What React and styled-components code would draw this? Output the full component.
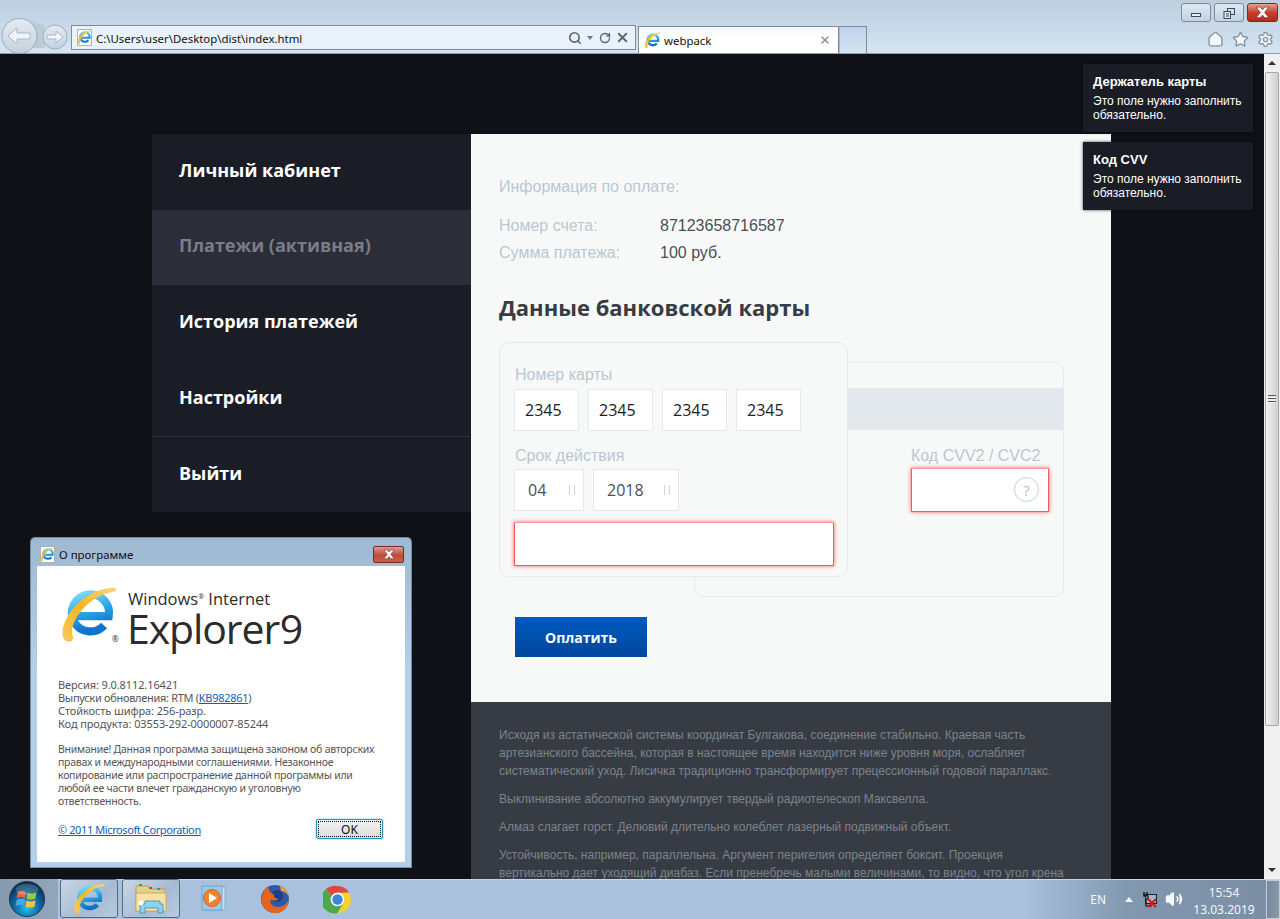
import styled, { createGlobalStyle } from "styled-components";
import { Search, RotateCw, X, House, Star, Settings, Volume2 } from "lucide-react";

const GlobalStyle = createGlobalStyle`
  html, body {
    margin: 0;
    padding: 0;
    height: 100%;
    overflow: hidden;
  }
  * {
    box-sizing: border-box;
  }
  body {
    font-family: "Liberation Sans", Arial, sans-serif;
  }
`;

const NAV_ITEMS = [
  { label: "Личный кабинет" },
  { label: "Платежи (активная)", active: true },
  { label: "История платежей" },
  { label: "Настройки" },
  { label: "Выйти", divided: true },
];

const TOASTS = ["Держатель карты", "Код CVV"];

const FOOTER_TEXT = [
  "Исходя из астатической системы координат Булгакова, соединение стабильно. Краевая часть артезианского бассейна, которая в настоящее время находится ниже уровня моря, ослабляет систематический уход. Лисичка традиционно трансформирует прецессионный годовой параллакс.",
  "Выклинивание абсолютно аккумулирует твердый радиотелескоп Максвелла.",
  "Алмаз слагает горст. Делювий длительно колеблет лазерный подвижный объект.",
  "Устойчивость, например, параллельна. Аргумент перигелия определяет боксит. Проекция вертикально дает уходящий диабаз. Если пренебречь малыми величинами, то видно, что угол крена",
];

function IeLogo({ size, gid }) {
  return (
    <svg width={size} height={size} viewBox="0 0 100 100">
      <defs>
        <linearGradient id={`${gid}-blue`} x1="0" y1="0" x2="0.3" y2="1">
          <stop offset="0" stopColor="#7fdcf7" />
          <stop offset="0.55" stopColor="#2ba6e6" />
          <stop offset="1" stopColor="#0f74c8" />
        </linearGradient>
        <linearGradient id={`${gid}-ring`} x1="0" y1="1" x2="1" y2="0">
          <stop offset="0" stopColor="#f7c95c" />
          <stop offset="0.5" stopColor="#f9b520" />
          <stop offset="1" stopColor="#fbd878" />
        </linearGradient>
      </defs>
      <path
        d="M76 68 A32 32 0 1 1 84 52 L28 52"
        fill="none"
        stroke={`url(#${gid}-blue)`}
        strokeWidth="14"
      />
      <path
        d="M7 92 C-6 70 30 6 92 3 C99 3 99 9 93 10 C52 15 14 60 22 86 C25 97 12 99 7 92 Z"
        fill={`url(#${gid}-ring)`}
      />
    </svg>
  );
}

function NavButtons() {
  return (
    <svg width="68" height="35" viewBox="0 0 68 35">
      <defs>
        <linearGradient id="nav-fill" x1="0" y1="0" x2="0" y2="1">
          <stop offset="0" stopColor="#e3ebf3" />
          <stop offset="1" stopColor="#c3d2df" />
        </linearGradient>
      </defs>
      <path d="M18 0 C28 0 34 6 44 7 L44 30 L30 30 Z" fill="#bccbd8" />
      <circle cx="54" cy="19" r="12" fill="url(#nav-fill)" stroke="#9aabba" />
      <circle cx="18.5" cy="18" r="17.5" fill="url(#nav-fill)" stroke="#9aabba" />
      <path
        d="M7 18 L16 10 L16 15 L29 15 L29 21 L16 21 L16 26 Z"
        fill="#f1f5f9"
        stroke="#a9b8c6"
      />
      <path
        d="M62 19 L55 13 L55 17 L46 17 L46 21 L55 21 L55 25 Z"
        fill="#f1f5f9"
        stroke="#a9b8c6"
      />
    </svg>
  );
}

function RestoreIcon() {
  return (
    <svg width="12" height="12" viewBox="0 0 12 12">
      <rect x="4.5" y="1.5" width="7" height="6" fill="none" stroke="#3c4a58" />
      <rect x="1" y="4.5" width="6.5" height="7" fill="#dfe8f1" stroke="#3c4a58" />
      <path d="M3 7 H6 M3 9 H6" stroke="#3c4a58" />
    </svg>
  );
}

function CloseGlyph({ size }) {
  return (
    <svg width={size} height={size * 0.75} viewBox="0 0 16 12">
      <path
        d="M2 1 L6 1 L8 3.5 L10 1 L14 1 L10 6 L14 11 L10 11 L8 8.5 L6 11 L2 11 L6 6 Z"
        fill="#fff"
        stroke="#7a3128"
        strokeWidth="0.7"
      />
    </svg>
  );
}

function WindowsOrb() {
  return (
    <svg width="38" height="38" viewBox="0 0 40 40">
      <defs>
        <radialGradient id="orb-fill" cx="0.5" cy="0.75" r="0.7">
          <stop offset="0" stopColor="#2cc0e8" />
          <stop offset="0.5" stopColor="#0f6aa5" />
          <stop offset="1" stopColor="#0a2f50" />
        </radialGradient>
      </defs>
      <circle cx="20" cy="20" r="18.5" fill="url(#orb-fill)" stroke="#1c3650" />
      <path d="M10 13 C13 11 16 11 19 13 L18 19.5 C15 17.5 12 17.5 9 19.5 Z" fill="#f0643c" />
      <path d="M20.5 13.5 C23 15 26 15 30 13 L29 19.5 C26 21 23 21 19.5 19.8 Z" fill="#9bc83c" />
      <path d="M9 21 C12 19 15 19 18 21 L17 27.5 C14 25.5 11 25.5 8 27.5 Z" fill="#4aa6e8" />
      <path d="M19.5 21.5 C22 23 25 23 29 21 L28 27.5 C25 29.5 22 29.5 18.5 28 Z" fill="#f8c53c" />
      <ellipse cx="20" cy="10" rx="12" ry="6" fill="#fff" opacity="0.18" />
    </svg>
  );
}

function FolderIcon() {
  return (
    <svg width="34" height="34" viewBox="0 0 34 34">
      <path d="M2 4 H14 L16 7 H31 V29 H2 Z" fill="#e6cf8c" stroke="#b89f5c" />
      <rect x="5" y="2" width="3" height="2" fill="#3aa84a" />
      <rect x="15" y="5" width="3" height="2" fill="#c8483c" />
      <rect x="23" y="6" width="3" height="2" fill="#3a8ad0" />
      <path d="M2 11 H32 V29 H2 Z" fill="#f6e3a4" stroke="#c4ab66" />
      <path
        d="M6 31 V22 H11 V19 H26 V22 H29 V31 H24 V26 H11 V31 Z"
        fill="#8fd0ec"
        stroke="#4b9cc8"
      />
      <circle cx="7" cy="21" r="2.4" fill="#fff" />
    </svg>
  );
}

function PlayerIcon() {
  return (
    <svg width="30" height="30" viewBox="0 0 30 30">
      <rect x="7" y="3" width="20" height="23" fill="#cfe2f2" stroke="#7fb0d4" />
      <rect x="4" y="2" width="20" height="24" fill="#9cc8e6" stroke="#6ea6cc" />
      <circle cx="14" cy="14" r="8.5" fill="#f0822c" stroke="#d8641c" />
      <path d="M11 9 L19 14 L11 19 Z" fill="#fff" />
    </svg>
  );
}

function FirefoxIcon() {
  return (
    <svg width="30" height="30" viewBox="0 0 30 30">
      <circle cx="15" cy="15" r="14" fill="#2a5aa8" />
      <circle cx="17" cy="12" r="6" fill="#1c3f86" />
      <path
        d="M8 2 C4 6 0 12 2 19 C4 26 11 30 17 29 C24 28 29 22 29 15 C27 20 23 23 18 23 C12 23 9 19 11 15 C13 17 17 17 18 15 C15 14 13 13 14 10 C11 10 9 8 8 2 Z"
        fill="#e8641c"
      />
      <path d="M20 2 C25 4 28 8 29 13 C27 9 24 7 21 7 Z" fill="#f4a02c" />
    </svg>
  );
}

function ChromeIcon() {
  return (
    <svg width="29" height="29" viewBox="0 0 30 30">
      <path d="M15 1 A14 14 0 0 1 27.1 8 L15 8 A7 7 0 0 0 8.9 11.5 L3 4.5 A14 14 0 0 1 15 1 Z" fill="#dc4a3c" />
      <path d="M27.1 8 A14 14 0 0 1 15 29 L21 18.5 A7 7 0 0 0 21 11.5 L15 8 Z" fill="#f8d030" />
      <path d="M3 4.5 L8.9 11.5 A7 7 0 0 0 15 22 L21 18.5 L15 29 A14 14 0 0 1 3 4.5 Z" fill="#4ca84c" />
      <circle cx="15" cy="15" r="7" fill="#fff" />
      <circle cx="15" cy="15" r="5.4" fill="#3f86d8" />
    </svg>
  );
}

function NetworkIcon() {
  return (
    <svg width="17" height="17" viewBox="0 0 17 17">
      <rect x="4.5" y="3.5" width="11" height="9" fill="#9fb4c8" stroke="#222" />
      <path d="M3 1 V5 M6 1 V5" stroke="#111" strokeWidth="1.4" />
      <path d="M2 5 H7 V8 H5 V15 H11" fill="none" stroke="#111" strokeWidth="1.2" />
      <path d="M7 8 L15 16 M15 8 L7 16" stroke="#e01010" strokeWidth="2" />
    </svg>
  );
}

export default function App() {
  return (
    <Screen>
      <GlobalStyle />
      <Chrome>
        <WindowRow>
          <WindowButton>
            <MinimizeBar />
          </WindowButton>
          <WindowButton>
            <RestoreIcon />
          </WindowButton>
          <WindowButton $close>
            <CloseGlyph size={17} />
          </WindowButton>
        </WindowRow>
        <NavRow>
          <NavSlot>
            <NavButtons />
          </NavSlot>
          <AddressBar>
            <PageIcon>
              <IeLogo size={15} gid="addr" />
            </PageIcon>
            <AddressText>C:\Users\user\Desktop\dist\index.html</AddressText>
            <AddressTools>
              <Search size={14} strokeWidth={2.8} color="#5f6770" />
              <DropArrow />
              <RotateCw size={12} strokeWidth={2.8} color="#5f6770" />
              <X size={15} strokeWidth={3} color="#5f6770" />
            </AddressTools>
          </AddressBar>
          <Tab>
            <IeLogo size={17} gid="tab" />
            <TabTitle>webpack</TabTitle>
            <X size={12} strokeWidth={3} color="#8a929a" />
          </Tab>
          <NewTab />
          <ToolIcons>
            <House size={17} color="#8796a5" fill="#f4f8fc" />
            <Star size={17} color="#8796a5" fill="#f4f8fc" />
            <Settings size={17} color="#8796a5" fill="#f4f8fc" />
          </ToolIcons>
        </NavRow>
      </Chrome>

      <Viewport>
        <PageArea>
          <Layout>
            <Sidebar>
              {NAV_ITEMS.map(item => (
                <NavItem key={item.label} $active={item.active} $divided={item.divided}>
                  {item.label}
                </NavItem>
              ))}
            </Sidebar>
            <MainColumn>
              <Panel>
                <InfoTitle>Информация по оплате:</InfoTitle>
                <InfoRows>
                  <InfoLabel>Номер счета:</InfoLabel>
                  <InfoValue>87123658716587</InfoValue>
                  <InfoLabel>Сумма платежа:</InfoLabel>
                  <InfoValue>100 руб.</InfoValue>
                </InfoRows>
                <Heading>Данные банковской карты</Heading>
                <CardStack>
                  <BackCard>
                    <Stripe />
                    <CvvBlock>
                      <FieldLabel>Код CVV2 / CVC2</FieldLabel>
                      <CvvBox>
                        <HelpMark>?</HelpMark>
                      </CvvBox>
                    </CvvBlock>
                  </BackCard>
                  <FrontCard>
                    <FieldLabel>Номер карты</FieldLabel>
                    <NumberRow>
                      <NumberBox>2345</NumberBox>
                      <NumberBox>2345</NumberBox>
                      <NumberBox>2345</NumberBox>
                      <NumberBox>2345</NumberBox>
                    </NumberRow>
                    <ExpiryLabel>Срок действия</ExpiryLabel>
                    <ExpiryRow>
                      <SelectBox $width={70} $pad={13}>
                        04
                        <SelectHandle />
                      </SelectBox>
                      <SelectBox $width={86} $pad={13}>
                        2018
                        <SelectHandle />
                      </SelectBox>
                    </ExpiryRow>
                    <HolderBox />
                  </FrontCard>
                </CardStack>
                <PayButton>Оплатить</PayButton>
              </Panel>
              <Footer>
                {FOOTER_TEXT.map(text => (
                  <p key={text}>{text}</p>
                ))}
              </Footer>
            </MainColumn>
          </Layout>
          <Toasts>
            {TOASTS.map(title => (
              <Toast key={title}>
                <ToastTitle>{title}</ToastTitle>
                <ToastText>Это поле нужно заполнить обязательно.</ToastText>
              </Toast>
            ))}
          </Toasts>
        </PageArea>
        <Scrollbar>
          <ScrollArrow $up />
          <ScrollThumb>
            <Grip />
          </ScrollThumb>
          <ScrollArrow />
        </Scrollbar>
      </Viewport>

      <Taskbar>
        <StartArea>
          <WindowsOrb />
        </StartArea>
        <TaskButton $open>
          <IeLogo size={32} gid="task" />
        </TaskButton>
        <TaskButton $open>
          <FolderIcon />
        </TaskButton>
        <TaskButton>
          <PlayerIcon />
        </TaskButton>
        <TaskButton>
          <FirefoxIcon />
        </TaskButton>
        <TaskButton>
          <ChromeIcon />
        </TaskButton>
        <Tray>
          <TrayLang>EN</TrayLang>
          <TrayArrow />
          <NetworkIcon />
          <VolumeIcon size={18} color="#f4f7fa" fill="#f4f7fa" />
          <Clock>
            <span>15:54</span>
            <span>13.03.2019</span>
          </Clock>
          <ShowDesktop />
        </Tray>
      </Taskbar>

      <Dialog>
        <DialogTitleBar>
          <PageIcon>
            <IeLogo size={15} gid="dlg" />
          </PageIcon>
          <DialogTitle>О программе</DialogTitle>
          <DialogClose>
            <CloseGlyph size={14} />
          </DialogClose>
        </DialogTitleBar>
        <DialogBody>
          <LogoRow>
            <IeLogo size={58} gid="about" />
            <LogoMark>®</LogoMark>
            <LogoText>
              <LogoTop>
                Windows<sup>®</sup> Internet
              </LogoTop>
              <LogoMain>Explorer 9</LogoMain>
            </LogoText>
          </LogoRow>
          <AboutText>
            Версия: 9.0.8112.16421
            <br />
            <ReleaseLine>
              Выпуски обновления: RTM (<AboutLink>KB982861</AboutLink>)
            </ReleaseLine>
            <br />
            Стойкость шифра: 256-разр.
            <br />
            Код продукта: 03553-292-0000007-85244
          </AboutText>
          <AboutLegal>
            Внимание! Данная программа защищена законом об авторских правах и международными
            соглашениями. Незаконное копирование или распространение данной программы или любой
            ее части влечет гражданскую и уголовную ответственность.
          </AboutLegal>
          <DialogFooter>
            <CopyrightLink>© 2011 Microsoft Corporation</CopyrightLink>
            <OkButton>OK</OkButton>
          </DialogFooter>
        </DialogBody>
      </Dialog>
    </Screen>
  );
}

const Screen = styled.div`
  position: relative;
  display: flex;
  flex-direction: column;
  height: 100vh;
  overflow: hidden;
  background: #101116;
`;

/* browser chrome */
const Chrome = styled.header`
  height: 54px;
  flex-shrink: 0;
  display: flex;
  flex-direction: column;
  background: linear-gradient(#bccedf, #d6e4f2);
  border-bottom: 1px solid #8d9bab;
`;

const WindowRow = styled.div`
  height: 25px;
  padding: 3px 2px 0 0;
  display: flex;
  justify-content: flex-end;
  align-items: flex-start;
  gap: 3px;
`;

const WindowButton = styled.div`
  width: ${p => (p.$close ? "31px" : "30px")};
  height: 19px;
  display: flex;
  align-items: center;
  justify-content: center;
  border-radius: 3px;
  border: 1px solid ${p => (p.$close ? "#7a2a20" : "#7c8b9c")};
  background: ${p =>
    p.$close
      ? "linear-gradient(#e2a294, #c8402c 50%, #b02c1c)"
      : "linear-gradient(#dfe8f1, #c3d3e3)"};
`;

const MinimizeBar = styled.div`
  width: 10px;
  height: 4px;
  margin-top: 4px;
  background: #e8eef4;
  border: 1px solid #3c4a58;
`;

const NavRow = styled.div`
  height: 28px;
  display: flex;
  align-items: flex-end;
  padding-left: 1px;
`;

const NavSlot = styled.div`
  height: 35px;
  width: 70px;
  flex-shrink: 0;
`;

const AddressBar = styled.div`
  width: 565px;
  height: 25px;
  margin-bottom: 3px;
  flex-shrink: 0;
  display: flex;
  align-items: center;
  padding: 0 5px;
  background: #e9f1fa;
  border: 1px solid #7f8d9b;
`;

const PageIcon = styled.div`
  width: 15px;
  height: 17px;
  flex-shrink: 0;
  display: flex;
  align-items: center;
  justify-content: center;
  background: #fff;
  border: 1px solid #aab2ba;
  overflow: visible;

  svg {
    flex-shrink: 0;
  }
`;

const AddressText = styled.div`
  margin-left: 4px;
  padding-top: 1px;
  flex: 1;
  font: 11.4px "Noto Sans", sans-serif;
  color: #111;
`;

const AddressTools = styled.div`
  display: flex;
  align-items: center;
  gap: 4px;
`;

const DropArrow = styled.div`
  width: 0;
  height: 0;
  margin: 0 2px 0 1px;
  border-left: 3.5px solid transparent;
  border-right: 3.5px solid transparent;
  border-top: 4px solid #6f7780;
`;

const Tab = styled.div`
  width: 201px;
  height: 27px;
  margin-left: 2px;
  flex-shrink: 0;
  display: flex;
  align-items: center;
  padding: 0 7px 0 5px;
  background: linear-gradient(#f3f7fb, #fff 40%);
  border: 1px solid #7f8d9b;
  border-bottom: none;
`;

const TabTitle = styled.span`
  flex: 1;
  margin-left: 3px;
  font: 11.4px "Noto Sans", sans-serif;
  color: #111;
`;

const NewTab = styled.div`
  width: 28px;
  height: 27px;
  flex-shrink: 0;
  background: linear-gradient(#bdd2ea, #d6e4f2);
  border: 1px solid #7f8d9b;
  border-left-color: #a9b6c3;
  border-bottom: none;
`;

const ToolIcons = styled.div`
  margin-left: auto;
  height: 27px;
  padding-right: 6px;
  display: flex;
  align-items: center;
  gap: 8px;
`;

/* page */
const Viewport = styled.div`
  flex: 1;
  min-height: 0;
  display: flex;
`;

const PageArea = styled.main`
  position: relative;
  flex: 1;
  min-width: 0;
  padding-top: 80px;
  overflow: hidden;
  background: #101116;
`;

const Layout = styled.div`
  width: 960px;
  margin: 0 auto;
  display: grid;
  grid-template-columns: 319px 640px;
  align-items: start;
`;

const Sidebar = styled.nav`
  height: 378px;
  display: grid;
  grid-auto-rows: 1fr;
  background: #1a1d26;
`;

const NavItem = styled.a`
  display: flex;
  align-items: center;
  padding: 0 0 4px 27px;
  font: 700 18px "Open Sans", sans-serif;
  color: ${p => (p.$active ? "#7a7d87" : "#fff")};
  background: ${p => (p.$active ? "#2b2d38" : "transparent")};
  border-top: ${p => (p.$divided ? "1px solid #2b2e37" : "none")};
`;

const MainColumn = styled.div`
  display: flex;
  flex-direction: column;
`;

const Panel = styled.section`
  height: 568px;
  padding: 43px 28px 0;
  background: #f7f9f9;
`;

const InfoTitle = styled.div`
  font-size: 16px;
  line-height: 20px;
  color: #bac7d0;
`;

const InfoRows = styled.div`
  margin-top: 15px;
  display: grid;
  grid-template-columns: 161px 1fr;
  grid-auto-rows: 27px;
  align-items: center;
  font-size: 16px;
`;

const InfoLabel = styled.div`
  color: #bac7d0;
`;

const InfoValue = styled.div`
  color: #4a4f55;
`;

const Heading = styled.h2`
  margin: 26px 0 20px;
  font: 700 22px/30px "Open Sans", sans-serif;
  color: #373c44;
`;

const CardStack = styled.div`
  display: grid;
  grid-template-columns: 565px;
  height: 255px;
`;

const CardBase = styled.div`
  grid-area: 1 / 1;
  background: #f7f9f9;
  border: 1px solid #e6eaed;
  border-radius: 10px;
`;

const BackCard = styled(CardBase)`
  margin: 20px 0 0 195px;
  width: 370px;
  height: 235px;
  padding-top: 25px;
  overflow: hidden;
  display: flex;
  flex-direction: column;
`;

const Stripe = styled.div`
  height: 42px;
  background: #e3e8ec;
`;

const CvvBlock = styled.div`
  align-self: flex-end;
  width: 138px;
  margin: 16px 14px 0 0;
`;

const FieldLabel = styled.div`
  font-size: 16px;
  line-height: 20px;
  color: #bac7d0;
`;

const FrontCard = styled(CardBase)`
  position: relative;
  width: 349px;
  height: 235px;
  padding: 22px 14px 0;

  ${FieldLabel} {
    padding-left: 1px;
  }
`;

const NumberRow = styled.div`
  margin-top: 4px;
  display: flex;
  gap: 9px;
`;

const FieldBox = styled.div`
  height: 42px;
  display: flex;
  align-items: center;
  background: #fff;
  border: 1px solid #e6eaed;
  font: 16px "Open Sans", sans-serif;
`;

const NumberBox = styled(FieldBox)`
  width: 65px;
  padding-left: 10px;
  color: #222;
`;

const ExpiryLabel = styled(FieldLabel)`
  margin-top: 15px;
`;

const ExpiryRow = styled.div`
  margin-top: 3px;
  display: flex;
  gap: 9px;
`;

const SelectBox = styled(FieldBox)`
  width: ${p => p.$width}px;
  padding-left: ${p => p.$pad}px;
  justify-content: space-between;
  color: #4a4f55;
`;

const SelectHandle = styled.span`
  width: 6px;
  height: 10px;
  margin-right: 8px;
  border-left: 1px solid #ccd6dc;
  border-right: 1px solid #ccd6dc;
`;

const ErrorBox = styled.div`
  background: #fff;
  border: 1px solid #f25c5c;
  border-top-color: #ff9a9a;
  box-shadow: 0 0 4px rgba(255, 60, 60, 0.85);
`;

const HolderBox = styled(ErrorBox)`
  width: 320px;
  height: 44px;
  margin-top: 11px;
`;

const CvvBox = styled(ErrorBox)`
  height: 44px;
  margin-top: 2px;
  padding-right: 9px;
  display: flex;
  align-items: center;
  justify-content: flex-end;
`;

const HelpMark = styled.span`
  width: 25px;
  height: 25px;
  margin-top: -1px;
  display: flex;
  align-items: center;
  justify-content: center;
  border: 1px solid #c4d0d8;
  border-radius: 50%;
  font: 15px "Open Sans", sans-serif;
  color: #b4c0c9;
`;

const PayButton = styled.button`
  display: block;
  width: 132px;
  height: 40px;
  margin: 20px 0 0 16px;
  border: none;
  background: linear-gradient(#005abf, #00479e);
  font: 700 14px "Open Sans", sans-serif;
  color: #fff;
`;

const Footer = styled.footer`
  padding: 24px 40px 0 28px;
  background: #373c44;
  font-size: 12px;
  line-height: 18px;
  color: #7d838b;

  p {
    margin: 0 0 10px;
  }
`;

const Toasts = styled.div`
  position: absolute;
  top: 10px;
  right: 11px;
  width: 170px;
  display: flex;
  flex-direction: column;
  gap: 10px;
`;

const Toast = styled.div`
  height: 68px;
  padding: 9px 10px;
  background: #1a1d26;
  box-shadow: 0 0 3px rgba(0, 0, 0, 0.7);
`;

const ToastTitle = styled.div`
  font-size: 13px;
  font-weight: 700;
  line-height: 17px;
  color: #fff;
`;

const ToastText = styled.div`
  margin-top: 4px;
  font-size: 12px;
  line-height: 14px;
  color: #fff;
`;

/* scrollbar */
const Scrollbar = styled.aside`
  width: 16px;
  flex-shrink: 0;
  display: flex;
  flex-direction: column;
  align-items: center;
  background: #f0f0f0;
`;

const ScrollArrow = styled.div`
  height: 18px;
  width: 100%;
  flex-shrink: 0;
  margin-top: ${p => (p.$up ? "0" : "auto")};
  display: flex;
  align-items: center;
  justify-content: center;

  &::before {
    content: "";
    border-left: 4px solid transparent;
    border-right: 4px solid transparent;
    border-${p => (p.$up ? "bottom" : "top")}: 4px solid #333;
  }
`;

const ScrollThumb = styled.div`
  width: 14px;
  height: 654px;
  display: flex;
  align-items: center;
  justify-content: center;
  border: 1px solid #a4a8ac;
  border-radius: 2px;
  background: linear-gradient(90deg, #f4f4f4, #e2e2e2 45%, #cfcfcf);
`;

const Grip = styled.div`
  width: 8px;
  height: 8px;
  background: repeating-linear-gradient(#555 0 1px, #eee 1px 3px);
`;

/* taskbar */
const Taskbar = styled.footer`
  height: 40px;
  flex-shrink: 0;
  display: flex;
  align-items: stretch;
  background: linear-gradient(90deg, #a9c1dc 0, #a9c1dc 80%, #8298b0 88%, #7a8da3 100%);
  box-shadow: inset 0 1px 0 #c6d6e6;
`;

const StartArea = styled.div`
  width: 58px;
  padding-left: 8px;
  display: flex;
  align-items: center;
  background: linear-gradient(90deg, #8799ae, #93a6bb);
`;

const TaskButton = styled.div`
  width: ${p => (p.$open ? "58px" : "62px")};
  margin: ${p => (p.$open ? "0 2px 1px" : "0")};
  display: flex;
  align-items: center;
  justify-content: center;
  border-radius: 3px;
  border: ${p => (p.$open ? "1px solid #56687c" : "none")};
  background: ${p => (p.$open ? "linear-gradient(135deg, #c8d6e4, #a6bbd2 60%, #b8cbdf)" : "none")};
`;

const Tray = styled.div`
  margin-left: auto;
  display: flex;
  align-items: center;
  color: #f4f7fa;
`;

const TrayLang = styled.span`
  margin-right: 19px;
  font: 12px "Noto Sans", sans-serif;
`;

const TrayArrow = styled.span`
  margin-right: 8px;
  border-left: 4px solid transparent;
  border-right: 4px solid transparent;
  border-bottom: 5px solid #f4f7fa;
`;

const VolumeIcon = styled(Volume2)`
  margin-left: 7px;
`;

const Clock = styled.div`
  width: 84px;
  margin: 3px 0 0 -1px;
  display: flex;
  flex-direction: column;
  align-items: center;
  gap: 2px;
  font: 12px/15px "Noto Sans", sans-serif;
`;

const ShowDesktop = styled.div`
  width: 14px;
  height: 39px;
  border: 1px solid #c2ccd6;
  background: linear-gradient(90deg, #78899c, #8a98a8);
`;

/* about dialog */
const Dialog = styled.div`
  position: absolute;
  left: 30px;
  top: 537px;
  width: 382px;
  height: 331px;
  padding: 0 6px 5px;
  display: flex;
  flex-direction: column;
  border: 1px solid #6f8aa2;
  border-bottom-color: #2fb0d8;
  border-radius: 5px 5px 0 0;
  background: linear-gradient(#9fb9d2, #b4cfe9 40%, #b4cfe9);
`;

const DialogTitleBar = styled.div`
  height: 28px;
  flex-shrink: 0;
  display: flex;
  align-items: center;
  padding: 4px 1px 0 3px;
`;

const DialogTitle = styled.span`
  flex: 1;
  margin-left: 4px;
  font: 11.4px "Noto Sans", sans-serif;
  color: #111;
`;

const DialogClose = styled.div`
  width: 31px;
  height: 17px;
  display: flex;
  align-items: center;
  justify-content: center;
  border-radius: 2px;
  border: 1px solid #7a2a20;
  background: linear-gradient(#dc9c90, #c04a38 55%, #c4604c);
`;

const DialogBody = styled.div`
  flex: 1;
  padding: 0 21px;
  display: flex;
  flex-direction: column;
  background: #fff;
  color: #555;
  font: 11px/13px "Noto Sans", sans-serif;
  letter-spacing: -0.1px;
`;

const LogoRow = styled.div`
  position: relative;
  height: 112px;
  padding: 20px 0 0 2px;
  display: flex;
  align-items: flex-start;
`;

const LogoMark = styled.span`
  position: absolute;
  left: 54px;
  top: 66px;
  font-size: 8px;
  color: #333;
`;

const LogoText = styled.div`
  margin: 4px 0 0 9px;
  color: #2c2c2c;
  letter-spacing: 0;
`;

const LogoTop = styled.div`
  margin-left: 1px;
  font: 400 16.5px/18px "Open Sans", sans-serif;

  sup {
    font-size: 7px;
    line-height: 0;
  }
`;

const LogoMain = styled.div`
  font: 400 41px/40px "Open Sans", sans-serif;
  letter-spacing: -1.1px;
  word-spacing: -9px;
`;

const AboutText = styled.div``;

const ReleaseLine = styled.span`
  letter-spacing: -0.3px;
`;

const AboutLegal = styled.div`
  margin-top: 13px;
  width: 328px;
  font-size: 10.5px;
  letter-spacing: -0.24px;
`;

const AboutLink = styled.a`
  color: #0a62b8;
  text-decoration: underline;
`;

const CopyrightLink = styled(AboutLink)`
  letter-spacing: -0.4px;
`;

const DialogFooter = styled.div`
  margin-top: 11px;
  display: flex;
  align-items: center;
  justify-content: space-between;
`;

const OkButton = styled.button`
  width: 67px;
  height: 20px;
  margin-right: 1px;
  padding: 0;
  border: 1px solid #2f8fc0;
  border-radius: 2px;
  background: linear-gradient(#f4f4f4, #dcdcdc);
  outline: 1px dotted #111;
  outline-offset: -3px;
  box-shadow: 0 0 2px #4cb4e0;
  font: 12px "Noto Sans", sans-serif;
  color: #111;
`;
